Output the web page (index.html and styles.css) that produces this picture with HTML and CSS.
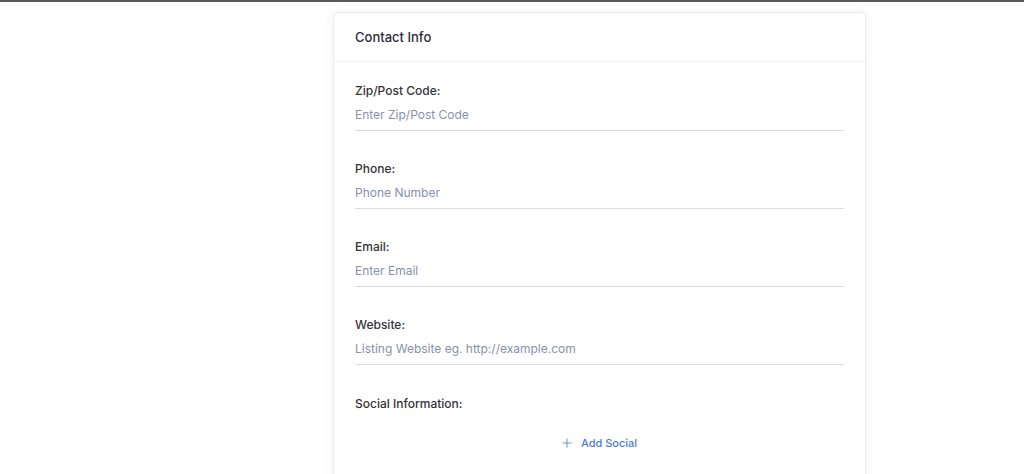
FILE: index.html
```html
<!DOCTYPE html>
<html>
<head>
<meta charset="utf-8">
<link rel="stylesheet" href="styles.css">
</head>
<body>
<div class="topbar"></div>
<main class="page">
  <section class="card">
    <header class="card-header">Contact Info</header>
    <div class="card-body">
      <div class="field">
        <label class="label">Zip/Post Code:</label>
        <input class="input" type="text" placeholder="Enter Zip/Post Code">
      </div>
      <div class="field">
        <label class="label">Phone:</label>
        <input class="input" type="text" placeholder="Phone Number">
      </div>
      <div class="field">
        <label class="label">Email:</label>
        <input class="input" type="text" placeholder="Enter Email">
      </div>
      <div class="field">
        <label class="label">Website:</label>
        <input class="input" type="text" placeholder="Listing Website eg. http://example.com">
      </div>
      <div class="field social">
        <label class="label">Social Information:</label>
        <button class="add-btn" type="button">
          <svg class="plus" width="10" height="10" viewBox="0 0 10 10"><path d="M5 0.5V9.5M0.5 5H9.5" stroke="currentColor" stroke-width="1.1" fill="none"/></svg>
          <span>Add Social</span>
        </button>
      </div>
    </div>
  </section>
</main>
</body>
</html>
```

FILE: styles.css
```css
html, body {
  margin: 0;
  padding: 0;
  background: #ffffff;
  font-family: "Inter", "Open Sans", "Liberation Sans", sans-serif;
  overflow: hidden;
  height: 474px;
}
.topbar {
  height: 2px;
  background: #5a5a5a;
}
.page {
  display: flex;
  justify-content: flex-start;
  padding-top: 10px;
  padding-left: 333px;
}
.card {
  width: 531px;
  border: 1px solid #ececf0;
  border-radius: 4px;
  background: #fff;
  box-shadow: 0 0 10px rgba(120, 120, 150, 0.10);
  min-height: 480px;
}
.card-header {
  height: 48px;
  display: flex;
  align-items: center;
  padding: 0 21px;
  font-size: 13px;
  font-weight: 500;
  color: #2c2c38;
  border-bottom: 1px solid #eff0f3;
}
.card-body {
  padding: 21px 21px 0;
}
.field {
  display: flex;
  flex-direction: column;
  margin-bottom: 30px;
}
.label {
  font-size: 12px;
  line-height: 16px;
  height: 16px;
  font-weight: 500;
  color: #333338;
}
.input {
  border: none;
  border-bottom: 1px solid #dcdde1;
  height: 31px;
  padding: 0;
  font-family: inherit;
  font-size: 12px;
  outline: none;
  color: #333;
  background: transparent;
}
.input::placeholder {
  color: #8a8fab;
}
.social {
  margin-bottom: 0;
}
.social .label {
  margin-top: 1px;
}
.add-btn {
  align-self: center;
  margin-top: 24px;
  display: flex;
  align-items: center;
  gap: 9px;
  border: none;
  background: none;
  padding: 0;
  font-family: inherit;
  font-size: 11px;
  font-weight: 500;
  color: #4c7bd8;
  cursor: pointer;
}
.plus {
  color: #6f94e0;
}
```
